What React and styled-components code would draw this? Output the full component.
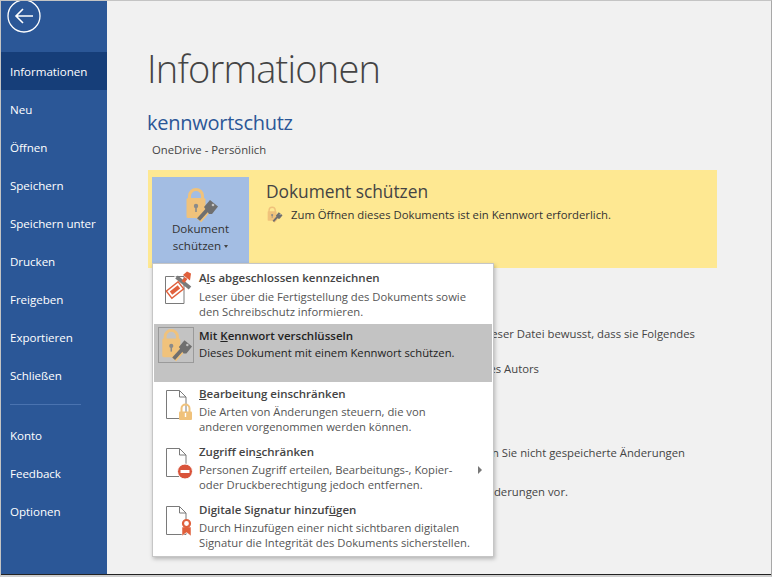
import React from "react";
import styled, { createGlobalStyle } from "styled-components";

const Global = createGlobalStyle`
  html, body { margin: 0; padding: 0; background: #f1f1f1; }
  body { font-family: "Open Sans", "Noto Sans", sans-serif; }
  * { box-sizing: border-box; }
`;
const Frame = styled.div`
  position: relative; width: 772px; height: 577px; overflow: hidden;
  display: flex; background: #f1f1f1;
  border-top: 1px solid #c4c4c4; border-left: 1px solid #c4c4c4; border-right: 1px solid #a8a8a8;
  border-bottom: 2px solid #cfcfcf;
  &::after { content: ""; position: absolute; left: -1px; right: -1px; bottom: 0; height: 1px; background: #222; }
`;
const Sidebar = styled.nav`
  width: 106px; flex: none; height: 574px; background: #2b5797; color: #fff;
  display: flex; flex-direction: column;
`;
const BackWrap = styled.div`
  height: 51px; padding: 0 0 0 6px; flex: none; overflow: hidden;
  svg { display: block; margin-top: -2px; }
`;
const NavItem = styled.div`
  height: 38px; flex: none; display: flex; align-items: center; padding-left: 9px;
  font-size: 11.6px; letter-spacing: -0.05px; color: #fff;
  background: ${p => (p.$active ? "#163e79" : "transparent")};
`;
const NavRule = styled.div`
  height: 1px; margin: 10px 0 11px 9px; background: #4a73b0; flex: none; width: 71px;
`;
const Main = styled.main`
  flex: 1; padding: 0 0 0 41px; color: #444; min-width: 0;
`;
const Title = styled.h1`
  margin: 42px 0 0 -1px; font-size: 38px; font-weight: 300; line-height: 50px; color: #444; letter-spacing: -0.8px;
`;
const DocName = styled.h2`
  margin: 16px 0 0 -1px; font-size: 20px; font-weight: 400; line-height: 28px; color: #2b5797; letter-spacing: -0.25px;
`;
const Location = styled.div`
  margin: 5px 0 0 4px; font-size: 11.3px; line-height: 16px; color: #444;
`;
const Banner = styled.section`
  margin-top: 12px; width: 569px; height: 98px; background: #fee892;
  padding: 7px 0 0 4px; display: flex;
`;
const ProtectBtn = styled.div`
  width: 97px; height: 86px; background: #a3bde3; flex: none;
  display: flex; flex-direction: column; align-items: center; padding-top: 10px; color: #333;
`;
const BtnLabel = styled.div`
  margin-top: -2px; font-size: 11.6px; line-height: 16.5px; text-align: center;
`;
const Caret = styled.span`
  display: inline-block; margin-left: 3px; vertical-align: 2px;
  border: 2.5px solid transparent; border-top: 3px solid #444; border-bottom: 0;
`;
const BannerBody = styled.div`
  margin-left: 17px; padding-top: 3px;
`;
const BannerTitle = styled.div`
  font-size: 17.4px; line-height: 22px; color: #444; letter-spacing: -0.05px;
`;
const BannerNote = styled.div`
  margin-top: 4px; display: flex; align-items: center; gap: 8px; font-size: 11.3px; color: #333; line-height: 16px;
`;
const Details = styled.div`
  padding-top: 58px; width: 623px;
`;
const DetailLine = styled.div`
  white-space: nowrap; font-size: 11.3px; line-height: 16px; color: #444; text-align: right;
  margin-top: ${p => p.$gap}px;
  padding-right: ${p => p.$inset}px;
`;
const Menu = styled.div`
  position: absolute; left: 151px; top: 262px; width: 342px; height: 294px;
  background: #fff; border: 1px solid #c6c6c6; box-shadow: 1px 2px 4px rgba(0,0,0,.25);
  padding: 1px 1px 0 1px;
  display: flex; flex-direction: column;
`;
const MenuRow = styled.div`
  position: relative; height: ${p => p.$h}px; flex: none; display: flex; padding: 3px 0 0 4px;
  background: ${p => (p.$active ? "#c3c3c3" : "transparent")};
`;
const IconBox = styled.div`
  width: 36px; height: 36px; flex: none; margin-right: 5px; display: flex; align-items: center; justify-content: center;
  margin-top: ${p => p.$drop || 0}px;
  border: 1px solid ${p => (p.$active ? "#9a9a9a" : "transparent")};
  svg { overflow: visible; }
`;
const MenuText = styled.div`
  min-width: 0; padding-top: ${p => p.$top || 0}px;
`;
const MenuTitle = styled.div`
  font-size: 11.5px; font-weight: 600; line-height: 17px; color: #444; white-space: nowrap;
  margin-bottom: ${p => p.$gap ?? 2}px;
  ${p => p.$active && "color:#222;"}
  u { text-underline-offset: 1px; }
`;
const MenuDesc = styled.div`
  font-size: 11.25px; line-height: 15px; color: #555; white-space: nowrap;
  ${p => p.$active && "color:#222;"}
`;
const SubArrow = styled.span`
  position: absolute; right: 10px; top: 26px;
  border: 4px solid transparent; border-left: 4px solid #777; border-right: 0;
`;

const LockKey = ({ s = 36 }) => (
  <svg width={s} height={s} viewBox="0 0 36 36">
    <path d="M6.5 13V8a6.500 6.500 0 0 1 13 0v5" fill="none" stroke="#f0c27b" strokeWidth="3" transform="translate(0 1)" />
    <rect x="3.500" y="11" width="19" height="20" rx="1.500" fill="#f0c27b" />
    <circle cx="13" cy="19" r="2.200" fill="#8a8a8a" />
    <rect x="12.200" y="19" width="1.600" height="6" fill="#8a8a8a" />
    <path d="M15.500 33l9.500-11" stroke="#f0c27b" strokeWidth="7" />
    <path d="M15.500 32.500l10-11" stroke="#6f6f6f" strokeWidth="4" />
    <path d="M21 20l6-7 8 6.500-6 7.500h-3z" fill="#6f6f6f" />
    <circle cx="30" cy="18" r="1.300" fill="#c4c4c4" />
  </svg>
);
const Page = ({ children }) => (
  <svg width="34" height="33" viewBox="0 0 34 33">
    <path d="M7.500 3.500h13l6.500 6.500v21.500h-19.500z" fill="#fff" stroke="#7a7a7a" strokeWidth="1" />
    <path d="M20.500 3.500v6.500h6.500" fill="none" stroke="#7a7a7a" strokeWidth="1" />
    {children}
  </svg>
);

const items = ["Neu","Öffnen","Speichern","Speichern unter","Drucken","Freigeben","Exportieren","Schließen"];

export default function App() {
  return (
    <>
      <Global />
      <Frame>
        <Sidebar>
          <BackWrap>
            <svg width="34" height="34" viewBox="0 0 34 34">
              <circle cx="17" cy="17" r="16" fill="none" stroke="#fff" strokeWidth="1.3" />
              <path d="M9 17h17M16 10l-7 7 7 7" fill="none" stroke="#fff" strokeWidth="1.6" />
            </svg>
          </BackWrap>
          <NavItem $active>Informationen</NavItem>
          {items.map(t => <NavItem key={t}>{t}</NavItem>)}
          <NavRule />
          <NavItem>Konto</NavItem>
          <NavItem>Feedback</NavItem>
          <NavItem>Optionen</NavItem>
        </Sidebar>
        <Main>
          <Title>Informationen</Title>
          <DocName>kennwortschutz</DocName>
          <Location>OneDrive - Persönlich</Location>
          <Banner>
            <ProtectBtn>
              <LockKey />
              <BtnLabel>Dokument<br />schützen<Caret /></BtnLabel>
            </ProtectBtn>
            <BannerBody>
              <BannerTitle>Dokument schützen</BannerTitle>
              <BannerNote><LockKey s={17} />Zum Öffnen dieses Dokuments ist ein Kennwort erforderlich.</BannerNote>
            </BannerBody>
          </Banner>
          <Details>
            <DetailLine $gap={0} $inset={76}>Machen Sie sich vor dem Veröffentlichen dieser Datei bewusst, dass sie Folgendes</DetailLine>
            <DetailLine $gap={19} $inset={232}>Dokumenteigenschaften und Name des Autors</DetailLine>
            <DetailLine $gap={68} $inset={86}>Verwalten Sie nicht gespeicherte Änderungen</DetailLine>
            <DetailLine $gap={23} $inset={203}>Es liegen keine Änderungen vor.</DetailLine>
          </Details>
        </Main>
        <Menu>
          <MenuRow $h={59}>
            <IconBox $drop={2}>
              <svg width="34" height="34" viewBox="0 0 34 34">
                <path d="M6.500 5.500h18.500v27h-18.500z" fill="#fff" stroke="#7a7a7a" />
                <path d="M16 5l-1 1 17 12 3-3z" fill="#fff" />
                <path d="M17.500 6l13.500 11" stroke="#7a7a7a" strokeWidth="4" />
                <path d="M24 11l3-4" stroke="#e0603c" strokeWidth="3.500" />
                <path d="M24 4l7 5.500 1-7-4-2z" fill="#e0603c" />
                <g transform="rotate(-38 16 19)">
                  <rect x="8.500" y="14.500" width="15" height="9" fill="#fff" stroke="#e0603c" strokeWidth="1.400" />
                  <rect x="11" y="17" width="10" height="4" fill="#e0603c" />
                </g>
              </svg>
            </IconBox>
            <MenuText $top={1}>
              <MenuTitle $gap={3}>A<u>l</u>s abgeschlossen kennzeichnen</MenuTitle>
              <MenuDesc>Leser über die Fertigstellung des Dokuments sowie<br />den Schreibschutz informieren.</MenuDesc>
            </MenuText>
          </MenuRow>
          <MenuRow $h={58} $active>
            <IconBox $active><LockKey s={34} /></IconBox>
            <MenuText>
              <MenuTitle $active $gap={1}>Mit <u>K</u>ennwort verschlüsseln</MenuTitle>
              <MenuDesc $active>Dieses Dokument mit einem Kennwort schützen.</MenuDesc>
            </MenuText>
          </MenuRow>
          <MenuRow $h={58}>
            <IconBox>
              <Page>
                <path d="M22.500 25v-3.500a4 4 0 0 1 8 0v3.500" fill="none" stroke="#f0c27b" strokeWidth="2" />
                <rect x="20" y="24.500" width="13" height="8.500" rx="1" fill="#f0c27b" />
                <rect x="25.800" y="26" width="1.400" height="4" fill="#fff" />
              </Page>
            </IconBox>
            <MenuText>
              <MenuTitle><u>B</u>earbeitung einschränken</MenuTitle>
              <MenuDesc>Die Arten von Änderungen steuern, die von<br />anderen vorgenommen werden können.</MenuDesc>
            </MenuText>
          </MenuRow>
          <MenuRow $h={58}>
            <IconBox>
              <Page>
                <circle cx="26" cy="26.500" r="7.500" fill="#d9533a" stroke="#fff" strokeWidth="1" />
                <rect x="21.500" y="25" width="9" height="3" fill="#fff" />
              </Page>
            </IconBox>
            <MenuText>
              <MenuTitle>Zugriff ein<u>s</u>chränken</MenuTitle>
              <MenuDesc>Personen Zugriff erteilen, Bearbeitungs-, Kopier-<br />oder Druckberechtigung jedoch entfernen.</MenuDesc>
            </MenuText>
            <SubArrow />
          </MenuRow>
          <MenuRow $h={58}>
            <IconBox>
              <Page>
                <path d="M23 24h9v9l-4.500-3.500-4.500 3.500z" fill="#e0603c" stroke="#fff" strokeWidth=".5" />
                <circle cx="27.500" cy="20.500" r="3.500" fill="#fff" stroke="#e0603c" strokeWidth="2.200" />
              </Page>
            </IconBox>
            <MenuText>
              <MenuTitle>Digitale Signatur hinzuf<u>ü</u>gen</MenuTitle>
              <MenuDesc>Durch Hinzufügen einer nicht sichtbaren digitalen<br />Signatur die Integrität des Dokuments sicherstellen.</MenuDesc>
            </MenuText>
          </MenuRow>
        </Menu>
      </Frame>
    </>
  );
}
